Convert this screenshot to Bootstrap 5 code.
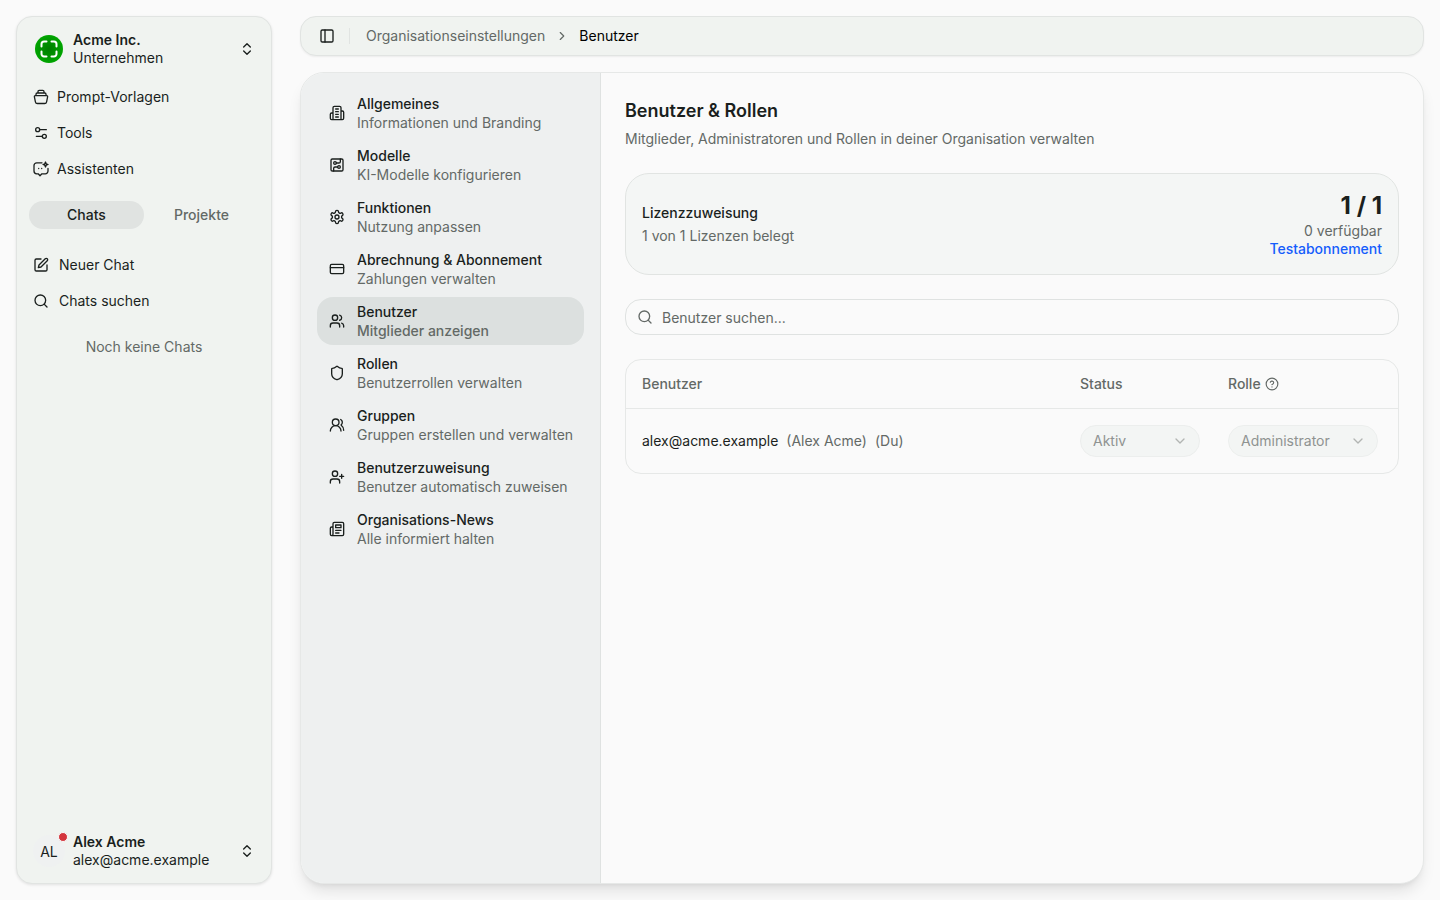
<!DOCTYPE html>
<html lang="de">
<head>
<meta charset="utf-8">
<meta name="viewport" content="width=device-width, initial-scale=1">
<title>Benutzer &amp; Rollen</title>
<link href="https://cdn.jsdelivr.net/npm/bootstrap@5.3.0/dist/css/bootstrap.min.css" rel="stylesheet">
<style>
  :root { --ink: #1a1f1d; --muted: #636966; --line: #e1e4e2; --panel: #f0f3f0; }
  body { font-family: Inter, "Liberation Sans", sans-serif; font-size: 14px; line-height: 20px; color: var(--ink); background: #fafafa; }
  svg { flex: none; fill: none; stroke: currentColor; stroke-width: 2; stroke-linecap: round; stroke-linejoin: round; }
  a { color: inherit; text-decoration: none; }
  button { color: inherit; }
  .text-soft { color: var(--muted); }
  .tight { line-height: 18px; }
  .shell { gap: 28px; }
  .sidebar { width: 256px; padding: 8px 12px; background: var(--panel); border: 1px solid var(--line); border-radius: 16px; box-shadow: 0 1px 3px rgba(0,0,0,.1); }
  .account { height: 48px; padding: 0 4px; gap: 8px; font-size: 14px; color: var(--ink); }
  .account-mark { width: 32px; height: 32px; }
  .avatar { background: #eff1f1; }
  .dot { width: 10px; height: 10px; top: -3px; right: -3px; background: #d4353d; border: 1px solid #fafafa; }
  .side-link { height: 32px; padding: 0 4px; gap: 8px; }
  .side-link .thin { stroke-width: 1.3; }
  .chat-link { height: 32px; padding: 0 4px; gap: 10px; }
  .tabs { margin: 16px 0 20px; }
  .tab-btn { height: 28px; font-weight: 500; color: var(--muted); border-radius: 14px; }
  .tab-btn.active { background: #e0e3e1; color: var(--ink); }
  .empty { margin-top: 20px; }
  .topbar { height: 40px; padding: 0 18px; background: var(--panel); border: 1px solid var(--line); border-radius: 16px; box-shadow: 0 1px 2px rgba(0,0,0,.06); }
  .rule { width: 1px; height: 16px; margin: 0 16px 0 14px; background: var(--line); }
  .crumbs { gap: 10px; }
  .main-card { background: #fafafa; border: 1px solid #e6e8e7; border-radius: 24px; box-shadow: 0 10px 15px -3px rgba(0,0,0,.1), 0 4px 6px -4px rgba(0,0,0,.1); }
  .settings-nav { width: 300px; background: #eef0f0; border-right: 1px solid #dfe2e1; }
  .set-link { height: 48px; padding: 0 8px 0 12px; gap: 12px; line-height: 19px; border-radius: 16px; white-space: nowrap; }
  .set-link.active { background: #dce0df; }
  .set-link strong { font-weight: 500; }
  .page-title { font-size: 18px; line-height: 28px; }
  .license { background: #f4f6f5; border: 1px solid var(--line); border-radius: 24px; }
  .count { font-size: 24px; line-height: 32px; }
  .trial { color: #155dfc; }
  .search-box svg { left: 12px; top: 10px; }
  .search-box input { height: 36px; padding: 0 12px 0 36px; font-size: 14px; background: transparent; border: 1px solid #dfe2e1; border-radius: 16px; color: var(--ink); }
  .search-box input::placeholder { color: var(--muted); }
  .table-frame { border: 1px solid #e6e8e7; border-radius: 16px; }
  .users { table-layout: fixed; }
  .users th { height: 48px; padding: 0 16px; font-weight: 500; color: var(--muted); border-bottom: 1px solid #e6e8e7; }
  .users td { padding: 16px; }
  .col-status { width: 148px; }
  .col-role { width: 186px; }
  .pill { color: #8f9391; }
  .pill select { height: 32px; padding: 0 12px; appearance: none; background: #f3f5f4; border: 1px solid #eceeed; border-radius: 16px; color: #8f9391; opacity: 1; }
  .pill svg { right: 12px; top: 8px; color: #b2b5b3; }
  .w-status { width: 120px; }
  .w-role { width: 150px; }
</style>
</head>
<body>
<div class="shell d-flex vh-100 p-3">
  <aside class="sidebar d-flex flex-column flex-shrink-0">
    <button type="button" class="account btn d-flex align-items-center border-0 text-start w-100">
      <span class="account-mark d-flex align-items-center justify-content-center">
        <svg width="28" height="28" viewBox="0 0 28 28" aria-hidden="true">
          <defs><radialGradient id="leaf"><stop offset="0" stop-color="#007d00"/><stop offset=".5" stop-color="#009000"/><stop offset="1" stop-color="#00a600"/></radialGradient></defs>
          <circle cx="14" cy="14" r="14" fill="url(#leaf)" stroke="none"/>
          <path d="M6.500 11.500V9a2.500 2.500 0 0 1 2.500-2.500h2.500M16.500 6.500H19A2.500 2.500 0 0 1 21.500 9v2.500M21.500 16.500V19a2.500 2.500 0 0 1-2.500 2.500h-2.500M11.500 21.500H9A2.500 2.500 0 0 1 6.500 19v-2.500" stroke="#fff"/>
        </svg>
      </span>
      <span class="d-flex flex-column flex-grow-1 tight"><span class="fw-semibold">Acme Inc.</span><span>Unternehmen</span></span>
      <svg width="16" height="16" viewBox="0 0 24 24"><path d="m7 15 5 5 5-5M7 9l5-5 5 5"/></svg>
    </button>
    <nav class="d-flex flex-column gap-1 mt-2">
      <a href="#" class="side-link d-flex align-items-center"><svg class="thin" width="16" height="16" viewBox="0 0 16 16"><path d="M5 3.900V2.600a1.200 1.200 0 0 1 1.200-1.200h3.600A1.200 1.200 0 0 1 11 2.600v1.300M3 6.600V5.200a1.200 1.200 0 0 1 1.200-1.200h7.600A1.200 1.200 0 0 1 13 5.200v1.400M2.300 6.700h11.400a.9.9 0 0 1 .9 1.100l-1 5a2.100 2.100 0 0 1-2.100 1.700h-7a2.100 2.100 0 0 1-2.100-1.700l-1-5a.9.9 0 0 1 .9-1.100Z"/></svg>Prompt-Vorlagen</a>
      <a href="#" class="side-link d-flex align-items-center"><svg width="16" height="16" viewBox="0 0 24 24"><path d="M20 7h-9M14 17H5"/><circle cx="17" cy="17" r="3"/><circle cx="7" cy="7" r="3"/></svg>Tools</a>
      <a href="#" class="side-link d-flex align-items-center"><svg class="thin" width="16" height="16" viewBox="0 0 16 16"><path d="M9 1.800H3.700A2.700 2.700 0 0 0 1 4.500v5.600a2.700 2.700 0 0 0 2.700 2.700h1.500L7 14.700l1.900-1.900h3.400a2.700 2.700 0 0 0 2.700-2.700V7.500"/><path d="M12.500 1 13.200 2.800 15 3.500 13.200 4.200 12.500 6 11.800 4.200 10 3.500 11.800 2.800Z"/><path d="M5.700 7.500h.01M8.700 7.500h.01"/></svg>Assistenten</a>
    </nav>
    <div class="tabs d-flex" role="tablist">
      <button type="button" role="tab" aria-selected="true" class="tab-btn active border-0 p-0 w-50">Chats</button>
      <button type="button" role="tab" aria-selected="false" class="tab-btn bg-transparent border-0 p-0 w-50">Projekte</button>
    </div>
    <div class="d-flex flex-column gap-1">
      <a href="#" class="chat-link d-flex align-items-center"><svg width="16" height="16" viewBox="0 0 24 24"><path d="M12 3H5a2 2 0 0 0-2 2v14a2 2 0 0 0 2 2h14a2 2 0 0 0 2-2v-7M18.375 2.625a2.120 2.120 0 1 1 3 3L12 15l-4 1 1-4Z"/></svg>Neuer Chat</a>
      <a href="#" class="chat-link d-flex align-items-center"><svg width="16" height="16" viewBox="0 0 24 24"><circle cx="11" cy="11" r="8"/><path d="m21 21-4.300-4.300"/></svg>Chats suchen</a>
    </div>
    <p class="empty text-center text-soft mb-0">Noch keine Chats</p>
    <button type="button" class="account btn d-flex align-items-center border-0 text-start w-100 mt-auto">
      <span class="account-mark avatar rounded-circle position-relative d-flex align-items-center justify-content-center">AL<span class="dot position-absolute rounded-circle"></span></span>
      <span class="d-flex flex-column flex-grow-1 tight"><span class="fw-semibold">Alex Acme</span><span>alex@acme.example</span></span>
      <svg width="16" height="16" viewBox="0 0 24 24"><path d="m7 15 5 5 5-5M7 9l5-5 5 5"/></svg>
    </button>
  </aside>

  <div class="d-flex flex-column flex-grow-1 gap-3">
    <header class="topbar d-flex align-items-center">
      <button type="button" class="bg-transparent border-0 p-0 d-flex" aria-label="Seitenleiste umschalten"><svg width="16" height="16" viewBox="0 0 24 24"><rect x="3" y="3" width="18" height="18" rx="2"/><path d="M9 3v18"/></svg></button>
      <span class="rule"></span>
      <nav class="crumbs d-flex align-items-center text-soft" aria-label="Brotkrumen">
        <a href="#">Organisationseinstellungen</a>
        <svg width="14" height="14" viewBox="0 0 24 24"><path d="m9 18 6-6-6-6"/></svg>
        <span class="text-black">Benutzer</span>
      </nav>
    </header>

    <div class="main-card d-flex flex-grow-1 overflow-hidden">
      <nav class="settings-nav d-flex flex-column flex-shrink-0 gap-1 p-3">
        <a href="#" class="set-link d-flex align-items-center"><svg width="16" height="16" viewBox="0 0 24 24"><path d="M6 22V4a2 2 0 0 1 2-2h8a2 2 0 0 1 2 2v18ZM6 12H4a2 2 0 0 0-2 2v6a2 2 0 0 0 2 2h2M18 9h2a2 2 0 0 1 2 2v9a2 2 0 0 1-2 2h-2M10 6h4M10 10h4M10 14h4M10 18h4"/></svg><span class="d-flex flex-column"><strong>Allgemeines</strong><span class="text-soft">Informationen und Branding</span></span></a>
        <a href="#" class="set-link d-flex align-items-center"><svg width="16" height="16" viewBox="0 0 24 24"><rect x="3" y="3" width="18" height="18" rx="2"/><path d="M11 9h4a2 2 0 0 0 2-2V3M7 21v-4a2 2 0 0 1 2-2h4"/><circle cx="9" cy="9" r="2"/><circle cx="15" cy="15" r="2"/></svg><span class="d-flex flex-column"><strong>Modelle</strong><span class="text-soft">KI-Modelle konfigurieren</span></span></a>
        <a href="#" class="set-link d-flex align-items-center"><svg width="16" height="16" viewBox="0 0 24 24"><path d="M12.220 2h-.44a2 2 0 0 0-2 2v.18a2 2 0 0 1-1 1.730l-.43.25a2 2 0 0 1-2 0l-.15-.08a2 2 0 0 0-2.730.73l-.22.38a2 2 0 0 0 .73 2.730l.15.1a2 2 0 0 1 1 1.720v.51a2 2 0 0 1-1 1.740l-.15.09a2 2 0 0 0-.73 2.730l.22.38a2 2 0 0 0 2.730.73l.15-.08a2 2 0 0 1 2 0l.43.25a2 2 0 0 1 1 1.730V20a2 2 0 0 0 2 2h.44a2 2 0 0 0 2-2v-.18a2 2 0 0 1 1-1.730l.43-.25a2 2 0 0 1 2 0l.15.08a2 2 0 0 0 2.730-.73l.22-.39a2 2 0 0 0-.73-2.730l-.15-.08a2 2 0 0 1-1-1.740v-.5a2 2 0 0 1 1-1.740l.15-.09a2 2 0 0 0 .73-2.730l-.22-.38a2 2 0 0 0-2.730-.73l-.15.08a2 2 0 0 1-2 0l-.43-.25a2 2 0 0 1-1-1.730V4a2 2 0 0 0-2-2z"/><circle cx="12" cy="12" r="3"/></svg><span class="d-flex flex-column"><strong>Funktionen</strong><span class="text-soft">Nutzung anpassen</span></span></a>
        <a href="#" class="set-link d-flex align-items-center"><svg width="16" height="16" viewBox="0 0 24 24"><rect x="2" y="5" width="20" height="14" rx="2"/><path d="M2 10h20"/></svg><span class="d-flex flex-column"><strong>Abrechnung &amp; Abonnement</strong><span class="text-soft">Zahlungen verwalten</span></span></a>
        <a href="#" class="set-link active d-flex align-items-center" aria-current="page"><svg width="16" height="16" viewBox="0 0 24 24"><path d="M16 21v-2a4 4 0 0 0-4-4H6a4 4 0 0 0-4 4v2M22 21v-2a4 4 0 0 0-3-3.870M16 3.130a4 4 0 0 1 0 7.750"/><circle cx="9" cy="7" r="4"/></svg><span class="d-flex flex-column"><strong>Benutzer</strong><span class="text-soft fw-medium">Mitglieder anzeigen</span></span></a>
        <a href="#" class="set-link d-flex align-items-center"><svg width="16" height="16" viewBox="0 0 24 24"><path d="M20 13c0 5-3.500 7.500-7.660 8.950a1 1 0 0 1-.67-.01C7.500 20.500 4 18 4 13V6a1 1 0 0 1 1-1c2 0 4.500-1.200 6.240-2.720a1.170 1.170 0 0 1 1.520 0C14.510 3.810 17 5 19 5a1 1 0 0 1 1 1z"/></svg><span class="d-flex flex-column"><strong>Rollen</strong><span class="text-soft">Benutzerrollen verwalten</span></span></a>
        <a href="#" class="set-link d-flex align-items-center"><svg width="16" height="16" viewBox="0 0 24 24"><path d="M18 21a8 8 0 0 0-16 0M22 20c0-3.370-2-6.500-4-8a5 5 0 0 0-.45-8.300"/><circle cx="10" cy="8" r="5"/></svg><span class="d-flex flex-column"><strong>Gruppen</strong><span class="text-soft">Gruppen erstellen und verwalten</span></span></a>
        <a href="#" class="set-link d-flex align-items-center"><svg width="16" height="16" viewBox="0 0 24 24"><path d="M16 21v-2a4 4 0 0 0-4-4H6a4 4 0 0 0-4 4v2M19 8v6M22 11h-6"/><circle cx="9" cy="7" r="4"/></svg><span class="d-flex flex-column"><strong>Benutzerzuweisung</strong><span class="text-soft">Benutzer automatisch zuweisen</span></span></a>
        <a href="#" class="set-link d-flex align-items-center"><svg width="16" height="16" viewBox="0 0 24 24"><path d="M4 22h16a2 2 0 0 0 2-2V4a2 2 0 0 0-2-2H8a2 2 0 0 0-2 2v16a2 2 0 0 1-2 2Zm0 0a2 2 0 0 1-2-2v-9c0-1.100.9-2 2-2h2M18 14h-8M15 18h-5M10 6h8v4h-8Z"/></svg><span class="d-flex flex-column"><strong>Organisations-News</strong><span class="text-soft">Alle informiert halten</span></span></a>
      </nav>

      <main class="flex-grow-1 d-flex flex-column gap-4 p-4">
        <div>
          <h1 class="page-title fw-semibold mb-1">Benutzer &amp; Rollen</h1>
          <p class="text-soft mb-0">Mitglieder, Administratoren und Rollen in deiner Organisation verwalten</p>
        </div>
        <section class="license d-flex align-items-center justify-content-between p-3">
          <div class="d-flex flex-column gap-1">
            <span class="fw-medium">Lizenzzuweisung</span>
            <span class="text-soft tight">1 von 1 Lizenzen belegt</span>
          </div>
          <div class="d-flex flex-column text-end tight">
            <span class="count fw-bold">1 / 1</span>
            <span class="text-soft">0 verfügbar</span>
            <span class="trial fw-medium">Testabonnement</span>
          </div>
        </section>
        <div class="search-box position-relative text-soft">
          <svg class="position-absolute" width="16" height="16" viewBox="0 0 24 24"><circle cx="11" cy="11" r="8"/><path d="m21 21-4.300-4.300"/></svg>
          <input type="search" class="w-100" placeholder="Benutzer suchen..." aria-label="Benutzer suchen">
        </div>
        <div class="table-frame overflow-hidden">
          <table class="users w-100">
            <thead>
              <tr><th scope="col">Benutzer</th><th scope="col" class="col-status">Status</th><th scope="col" class="col-role"><span class="d-flex align-items-center gap-1">Rolle <svg width="14" height="14" viewBox="0 0 24 24"><circle cx="12" cy="12" r="10"/><path d="M9.090 9a3 3 0 0 1 5.830 1c0 2-3 3-3 3M12 17h.01"/></svg></span></th></tr>
            </thead>
            <tbody>
              <tr>
                <td><div class="d-flex gap-2"><span>alex@acme.example</span><span class="text-soft">(Alex Acme)</span><span class="text-soft">(Du)</span></div></td>
                <td><div class="pill w-status position-relative"><select class="w-100 d-block" disabled aria-label="Status"><option>Aktiv</option></select><svg class="position-absolute" width="16" height="16" viewBox="0 0 24 24"><path d="m6 9 6 6 6-6"/></svg></div></td>
                <td><div class="pill w-role position-relative"><select class="w-100 d-block" disabled aria-label="Rolle"><option>Administrator</option></select><svg class="position-absolute" width="16" height="16" viewBox="0 0 24 24"><path d="m6 9 6 6 6-6"/></svg></div></td>
              </tr>
            </tbody>
          </table>
        </div>
      </main>
    </div>
  </div>
</div>
<script src="https://cdn.jsdelivr.net/npm/bootstrap@5.3.0/dist/js/bootstrap.bundle.min.js"></script>
</body>
</html>
